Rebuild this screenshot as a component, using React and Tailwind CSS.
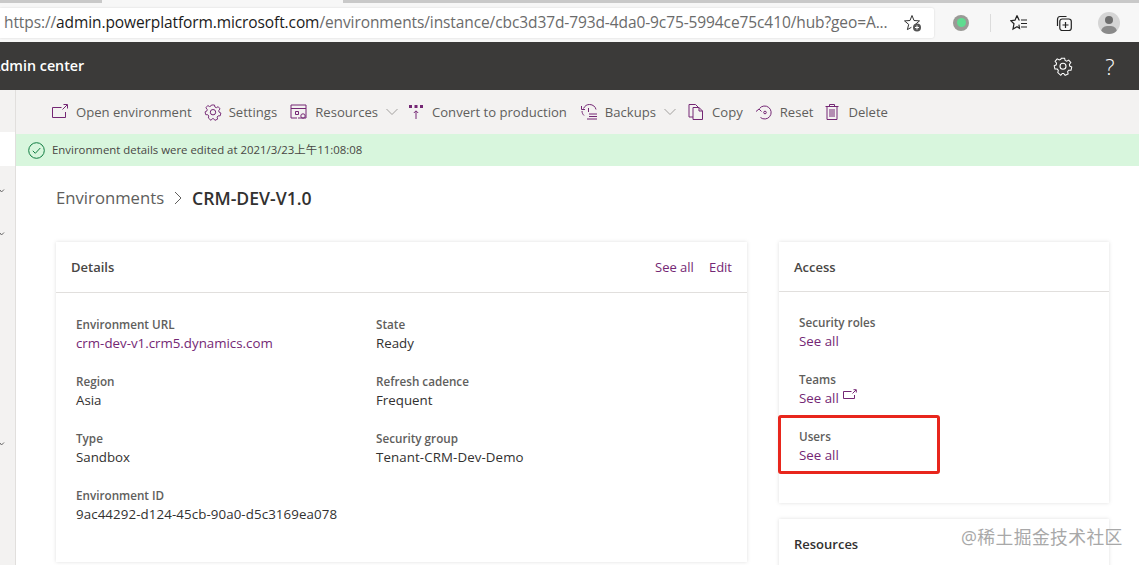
import React from "react";

const PLUM = "#742774";

function Glyph({ size = 18, children, className = "", color = PLUM, sw = 1 }) {
  return (
    <svg
      width={size}
      height={size}
      viewBox="0 0 18 18"
      fill="none"
      stroke={color}
      strokeWidth={sw}
      className={`shrink-0 ${className}`}
    >
      {children}
    </svg>
  );
}

const OpenIcon = (p) => (
  <Glyph {...p}>
    <path d="M10.5 4.5H1.5v10h13V9" />
    <path d="M11.5 6.5 16 2M12.5 1.5H16.5V5.5" />
  </Glyph>
);

const GearPath = () => (
  <>
    <path d="M7.4 1.5h3.2l.5 2.2 1.5.7 2-1.1 2 2.4-1.4 1.8.3 1.6 2 1-.7 3-2.3.1-1 1.3.5 2.2-2.9 1.3-1.4-1.8H8.3l-1.4 1.8L4 15.5l.5-2.2-1-1.3-2.3-.1-.7-3 2-1 .3-1.6L1.4 4.5l2-2.4 2 1.1 1.5-.7z" transform="translate(.6 .6) scale(.93)" />
    <circle cx="9" cy="9.2" r="2.7" />
  </>
);

const Chevron = () => (
  <svg width="12" height="8" viewBox="0 0 12 8" fill="none" stroke="#a19f9d" className="shrink-0">
    <path d="M.5 1 6 6.5 11.5 1" />
  </svg>
);

const toolbar = [
  {
    label: "Open environment",
    gap: "mr-[12px]",
    icon: <OpenIcon />,
  },
  {
    label: "Settings",
    gap: "mr-[13px]",
    icon: (
      <Glyph>
        <GearPath />
      </Glyph>
    ),
  },
  {
    label: "Resources",
    chevron: true,
    gap: "mr-[9px]",
    icon: (
      <Glyph>
        <path d="M1 2h15v13H8M1 2v13h6M1 5.5h15" />
        <path d="M5.5 8.5h3v3h-3z" />
        <circle cx="13" cy="13" r="2.2" />
      </Glyph>
    ),
  },
  {
    label: "Convert to production",
    gap: "mr-[13px]",
    icon: (
      <Glyph>
        <path d="M2 2h3v3H2zM7.5 2h3v3h-3zM13 2h3v3h-3z" fill={PLUM} stroke="none" />
        <path d="M9 16V8M6.8 10 9 7.8 11.2 10" />
      </Glyph>
    ),
  },
  {
    label: "Backups",
    chevron: true,
    gap: "mr-[11px]",
    icon: (
      <Glyph>
        <path d="M3.5 5.5C5 2.5 7 1.5 9.5 1.5c3.5 0 6 2.3 6.5 5M4 12.500c-1-1-2-2.500-2-4.500M1.500 3v3.500H5" />
        <path d="M8.500 5v4M9 11h8M9 13.500h8M7 16h10" />
      </Glyph>
    ),
  },
  {
    label: "Copy",
    gap: "mr-[12px]",
    icon: (
      <Glyph>
        <path d="M6 14H2V1.500h6.500L11 4" />
        <path d="M6 4.500h6l3.500 3.500v8.500H6z" />
        <path d="M12 4.500V8h3.500" />
      </Glyph>
    ),
  },
  {
    label: "Reset",
    gap: "mr-[10px]",
    icon: (
      <Glyph>
        <path d="M4.500 5.500A6.500 6.500 0 1 1 5.500 14.500" />
        <path d="M1 8.500 4 6l2.500 2.500" />
        <circle cx="10" cy="9.500" r="1.300" />
      </Glyph>
    ),
  },
  {
    label: "Delete",
    icon: (
      <Glyph>
        <path d="M2.500 3.500h13M6.500 3.500v-2h5v2M4 3.500v13h10v-13M7 6v8M9 6v8M11 6v8" />
      </Glyph>
    ),
  },
];

function Field({ label, value, link, wide }) {
  return (
    <div className="h-[57px]">
      <div className="h-[18px] text-[11.7px] leading-[16px] font-semibold text-[#605e5c]">{label}</div>
      <div className={`text-[13.3px] leading-[18px] ${link ? "text-[#742774]" : "text-[#323130]"} ${wide ? "tracking-[0.1px]" : ""}`}>{value}</div>
    </div>
  );
}

function AccessRow({ label, external }) {
  return (
    <div className="h-[57px]">
      <div className="h-[18px] text-[11.7px] leading-[16px] font-semibold text-[#605e5c]">{label}</div>
      <div className="flex items-start gap-[4px] text-[13.3px] leading-[18px] text-[#742774]">
        See all
        {external && (
          <svg width="14" height="12" viewBox="0 0 14 12" fill="none" stroke={PLUM}>
            <path d="M8.500 2.500H.5v7h11V6" />
            <path d="M9.500 4.500 13 1M10.500.7H13.300V3.500" />
          </svg>
        )}
      </div>
    </div>
  );
}

export default function App() {
  return (
    <div
      className="relative flex h-[565px] w-[1139px] flex-col overflow-hidden bg-white"
      style={{ fontFamily: '"Open Sans", "Noto Sans CJK SC", sans-serif' }}
    >
      {/* browser chrome */}
      <div className="flex h-[3px] shrink-0 bg-[#c9c9c9]">
        <div className="ml-[102px] w-[241px] bg-[#f7f7f7]" />
      </div>
      <div className="flex h-[39px] shrink-0 items-center bg-[#f7f7f7]">
        <div className="flex h-[30px] w-[934px] items-center justify-between rounded-r-[2px] bg-white pl-[4px] pr-[12px] shadow-[0_0_2px_rgba(0,0,0,0.15)]">
          <div className="whitespace-nowrap text-[15.5px] tracking-[-0.1px] text-[#6b6b6b]">
            https://<span className="text-[#1b1b1b]">admin.powerplatform.microsoft.com</span>
            /environments/instance/cbc3d37d-793d-4da0-9c75-5994ce75c410/hub?geo=A...
          </div>
          <svg width="18" height="18" viewBox="0 0 18 18" fill="none" stroke="#333" className="shrink-0">
            <path d="M8 1.500 10 6.500l5.500.4-4.200 3.500 1 3.500M8 1.500 6 6.500l-5.500.4 4.200 3.500-1.300 5.200 4-2.300" />
            <circle cx="13" cy="13.500" r="4" fill="#555" stroke="none" />
            <path d="M13 11.500v4M11 13.500h4" stroke="#fff" />
          </svg>
        </div>
        <div className="ml-[19px] flex h-[16px] w-[16px] items-center justify-center rounded-full bg-[#9a9a96]">
          <div className="h-[9px] w-[9px] rounded-full bg-[#5fdc90]" />
        </div>
        <div className="ml-[21px] h-[18px] w-px bg-[#dcdcdc]" />
        <svg width="18" height="18" viewBox="0 0 18 18" fill="none" stroke="#222" strokeWidth="1.200" className="ml-[19px]">
          <path d="M7 1.500 9 6h-.5M7 1.500 5 6.200.8 6.700l3.200 3L3 15l4-2.300 2.500 1.500-.6-3.500M11 6h6M11 9.500h6M11 13h6" />
        </svg>
        <svg width="18" height="18" viewBox="0 0 18 18" fill="none" stroke="#222" strokeWidth="1.200" className="ml-[27px]">
          <path d="M5 2.500h6.500M2.500 12V5.500c0-1.500 1-3 2.500-3" />
          <rect x="4.800" y="5" width="11.500" height="11.500" rx="2.500" />
          <path d="M10.500 8v6M7.500 11h6" />
        </svg>
        <div className="relative ml-[25px] h-[22px] w-[22px] overflow-hidden rounded-full bg-[#d5d5d5]">
          <div className="absolute left-[7px] top-[4px] h-[8px] w-[8px] rounded-full bg-[#6e6e6e]" />
          <div className="absolute left-[3px] top-[14px] h-[12px] w-[16px] rounded-full bg-[#8a8a8a]" />
        </div>
      </div>

      {/* suite header */}
      <div className="flex h-[48px] shrink-0 items-center justify-between bg-[#3b3a39] pr-[22px] text-white">
        <div className="ml-[-9px] text-[14.3px] font-semibold">Admin center</div>
        <div className="flex items-center gap-[30px]">
          <Glyph color="#fff" size={20}>
            <GearPath />
          </Glyph>
          <span className="w-[14px] text-center text-[22px] font-light leading-none">?</span>
        </div>
      </div>

      <div className="flex min-h-0 flex-1">
        {/* collapsed nav edge */}
        <div className="flex w-[16px] shrink-0 flex-col border-r border-[#e1dfdd] bg-[#f3f2f1]">
          <div className="h-[42px]" />
          <div className="h-[34px] bg-white" />
          <svg width="5" height="4" viewBox="0 0 5 4" fill="none" stroke="#666" className="mt-[23px]"><path d="M0 1 1.500 3 4 .5" /></svg>
          <svg width="5" height="4" viewBox="0 0 5 4" fill="none" stroke="#666" className="mt-[39px]"><path d="M0 1 1.500 3 4 .5" /></svg>
          <svg width="5" height="4" viewBox="0 0 5 4" fill="none" stroke="#666" className="mt-[206px]"><path d="M0 1 1.500 3 4 .5" /></svg>
        </div>

        <div className="flex min-w-0 flex-1 flex-col">
          {/* commands */}
          <div className="flex h-[44px] shrink-0 items-center whitespace-nowrap bg-[#f3f2f1] pl-[35px] text-[13.1px] text-[#605e5c]">
            {toolbar.map((t) => (
              <div key={t.label} className={`flex items-center ${t.gap || ""}`}>
                {t.icon}
                <span className="ml-[7px] pt-[1px]">{t.label}</span>
                {t.chevron && <span className="ml-[8px]"><Chevron /></span>}
              </div>
            ))}
          </div>

          {/* notification */}
          <div className="flex h-[32px] shrink-0 items-center gap-[7px] bg-[#d8f6dd] pl-[12px] text-[11.4px] text-[#484644]">
            <svg width="17" height="17" viewBox="0 0 17 17" fill="none" stroke="#107c41">
              <circle cx="8.500" cy="8.500" r="7.800" />
              <path d="M4.800 8.800 7.300 11.300 12.300 6" />
            </svg>
            Environment details were edited at 2021/3/23上午11:08:08
          </div>

          {/* content */}
          <div className="min-h-0 flex-1 pl-[40px]">
            <div className="flex h-[76px] items-center pb-[12px]">
              <span className="text-[16.7px] text-[#605e5c]">Environments</span>
              <svg width="10" height="14" viewBox="0 0 10 14" fill="none" stroke="#605e5c" className="mx-[9px]"><path d="M2 1l6 6-6 6" /></svg>
              <span className="text-[17.6px] font-semibold text-[#323130]">CRM-DEV-V1.0</span>
            </div>

            <div className="flex items-start gap-[32px]">
              <section className="h-[320px] w-[691px] shrink-0 bg-white shadow-[0_0_4px_rgba(0,0,0,0.13)]">
                <div className="flex h-[51px] items-center justify-between border-b border-[#e1dfdd] px-[15px] pt-[1px] text-[13px]">
                  <span className="font-semibold text-[#484644]">Details</span>
                  <span className="flex gap-[15px] text-[#742774]">
                    <span>See all</span>
                    <span>Edit</span>
                  </span>
                </div>
                <div className="grid grid-cols-[300px_1fr] px-[20px] pt-[23px]">
                  <div>
                    <Field label="Environment URL" value="crm-dev-v1.crm5.dynamics.com" link />
                    <Field label="Region" value="Asia" />
                    <Field label="Type" value="Sandbox" />
                    <Field label="Environment ID" value="9ac44292-d124-45cb-90a0-d5c3169ea078" wide />
                  </div>
                  <div>
                    <Field label="State" value="Ready" />
                    <Field label="Refresh cadence" value="Frequent" />
                    <Field label="Security group" value="Tenant-CRM-Dev-Demo" wide />
                  </div>
                </div>
              </section>

              <div className="flex w-[330px] shrink-0 flex-col gap-[16px]">
                <section className="h-[261px] bg-white shadow-[0_0_4px_rgba(0,0,0,0.13)]">
                  <div className="flex h-[50px] items-center border-b border-[#e1dfdd] px-[15px] pt-[2px] text-[13px] font-semibold text-[#484644]">
                    Access
                  </div>
                  <div className="px-[20px] pt-[22px]">
                    <AccessRow label="Security roles" />
                    <AccessRow label="Teams" external />
                    <div className="relative">
                      <AccessRow label="Users" />
                      <div className="absolute left-[-21px] top-[-13px] h-[59px] w-[162px] rounded-[3px] border-[3px] border-[#e8261c]" />
                    </div>
                  </div>
                </section>
                <section className="h-[60px] bg-white shadow-[0_0_4px_rgba(0,0,0,0.13)]">
                  <div className="flex h-[50px] items-center px-[15px] pt-[1px] text-[13px] font-semibold text-[#323130]">
                    Resources
                  </div>
                </section>
              </div>
            </div>
          </div>
        </div>
      </div>

      {/* watermark */}
      <div className="absolute left-[961px] top-[526px] whitespace-nowrap text-[17.8px] leading-[22px] tracking-[0.4px] text-[#a8a8a8]">
        @稀土掘金技术社区
      </div>
    </div>
  );
}
